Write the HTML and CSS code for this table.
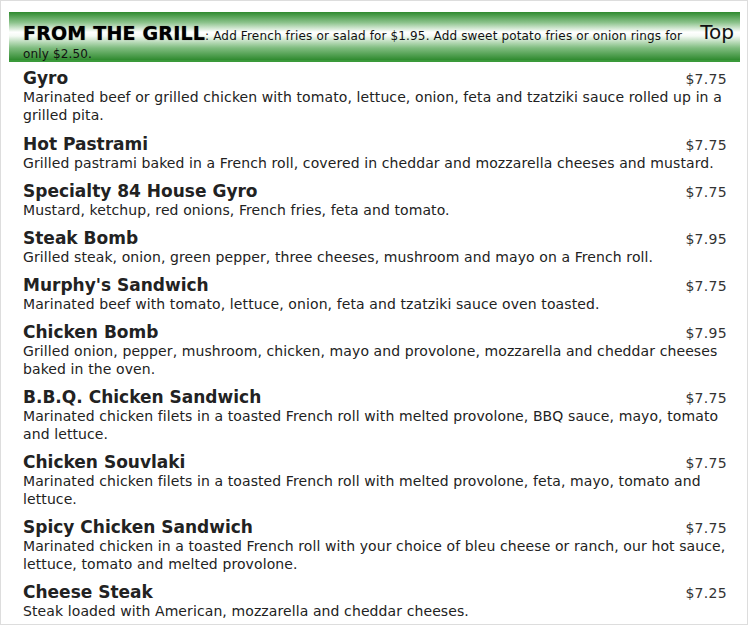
FILE: index.html
```html
<!DOCTYPE html>
<html>
<head>
<meta charset="utf-8">
<link rel="stylesheet" href="styles.css">
</head>
<body>
<div class="menu">
  <div class="bar">
    <div class="bar-text"><span class="bar-title">FROM THE GRILL</span>: Add French fries or salad for $1.95. Add sweet potato fries or onion rings for only $2.50.</div>
    <a class="top" href="#">Top</a>
  </div>
  <div class="items">
    <div class="item"><div class="row"><span class="name">Gyro</span><span class="price">$7.75</span></div><p class="desc">Marinated beef or grilled chicken with tomato, lettuce, onion, feta and tzatziki sauce rolled up in a grilled pita.</p></div>
    <div class="item"><div class="row"><span class="name">Hot Pastrami</span><span class="price">$7.75</span></div><p class="desc">Grilled pastrami baked in a French roll, covered in cheddar and mozzarella cheeses and mustard.</p></div>
    <div class="item"><div class="row"><span class="name">Specialty 84 House Gyro</span><span class="price">$7.75</span></div><p class="desc">Mustard, ketchup, red onions, French fries, feta and tomato.</p></div>
    <div class="item"><div class="row"><span class="name">Steak Bomb</span><span class="price">$7.95</span></div><p class="desc">Grilled steak, onion, green pepper, three cheeses, mushroom and mayo on a French roll.</p></div>
    <div class="item"><div class="row"><span class="name">Murphy's Sandwich</span><span class="price">$7.75</span></div><p class="desc">Marinated beef with tomato, lettuce, onion, feta and tzatziki sauce oven toasted.</p></div>
    <div class="item"><div class="row"><span class="name">Chicken Bomb</span><span class="price">$7.95</span></div><p class="desc">Grilled onion, pepper, mushroom, chicken, mayo and provolone, mozzarella and cheddar cheeses baked in the oven.</p></div>
    <div class="item"><div class="row"><span class="name">B.B.Q. Chicken Sandwich</span><span class="price">$7.75</span></div><p class="desc">Marinated chicken filets in a toasted French roll with melted provolone, BBQ sauce, mayo, tomato and lettuce.</p></div>
    <div class="item"><div class="row"><span class="name">Chicken Souvlaki</span><span class="price">$7.75</span></div><p class="desc">Marinated chicken filets in a toasted French roll with melted provolone, feta, mayo, tomato and lettuce.</p></div>
    <div class="item"><div class="row"><span class="name">Spicy Chicken Sandwich</span><span class="price">$7.75</span></div><p class="desc">Marinated chicken in a toasted French roll with your choice of bleu cheese or ranch, our hot sauce, lettuce, tomato and melted provolone.</p></div>
    <div class="item"><div class="row"><span class="name">Cheese Steak</span><span class="price">$7.25</span></div><p class="desc">Steak loaded with American, mozzarella and cheddar cheeses.</p></div>
  </div>
</div>
</body>
</html>
```
FILE: styles.css
```css
html, body {
  margin: 0;
  padding: 0;
  background: #ffffff;
}
body {
  font-family: "DejaVu Sans", Verdana, sans-serif;
  color: #222222;
}
.menu {
  box-sizing: border-box;
  width: 748px;
  height: 625px;
  border: 1px solid #dddddd;
  padding: 11px 7px 0 8px;
  overflow: hidden;
}
.bar {
  box-sizing: border-box;
  height: 50px;
  display: flex;
  justify-content: space-between;
  align-items: flex-start;
  padding: 12px 6px 0 14px;
  background: linear-gradient(to bottom, #2f8a2f 0%, #8cc38c 22%, #ffffff 42%, #f4faf4 50%, #7fbc7f 75%, #2f8a2f 100%);
  border-bottom: 2px solid #3a9a3a;
}
.bar-text {
  font-size: 12px;
  line-height: 18px;
  letter-spacing: 0.15px;
  color: #111111;
  width: 665px;
}
.bar-title {
  display: inline-block;
  line-height: 18px;
  height: 18px;
  font-size: 19px;
  letter-spacing: 0.2px;
  font-weight: bold;
  color: #000000;
  text-shadow: 0 0 1px #555555;
}
.top {
  font-size: 20px;
  line-height: 20px;
  color: #111111;
  text-decoration: none;
  margin-top: -2px;
}
.items {
  padding: 6px 9px 0 14px;
}
.item {
  margin-bottom: 9px;
}
.item:first-child {
  margin-bottom: 10px;
}
.row {
  display: flex;
  justify-content: space-between;
  align-items: baseline;
}
.name {
  font-size: 17px;
  line-height: 20px;
  font-weight: bold;
  color: #222222;
}
.price {
  font-size: 14px;
  letter-spacing: 0.3px;
  line-height: 18px;
  color: #333333;
  padding-right: 4px;
}
.desc {
  margin: 0;
  font-size: 14px;
  line-height: 18px;
  letter-spacing: 0.1px;
  color: #222222;
}
```
